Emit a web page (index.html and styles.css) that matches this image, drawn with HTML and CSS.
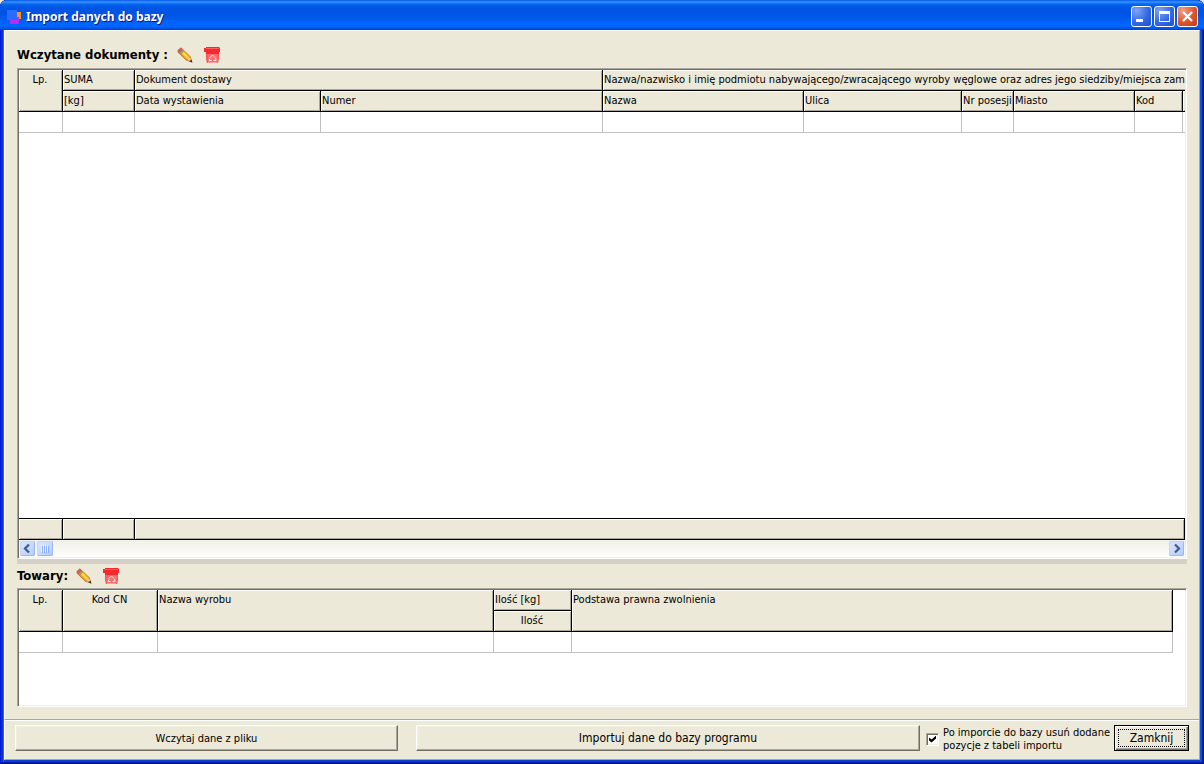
FILE: index.html
```html
<!DOCTYPE html>
<html lang="pl">
<head>
<meta charset="utf-8">
<title>Import danych do bazy</title>
<link rel="stylesheet" href="styles.css">
</head>
<body>
<svg class="symbols" aria-hidden="true">
  <symbol id="pencil" viewBox="0 0 16 16">
    <path d="M1 3L4 0.5L13.6 9.6L15.4 15.4L9.5 13.8L0.6 5.2Z" fill="#b87428"/>
    <path d="M0.6 3.4L3.6 0.6L5.6 2.8L2.6 5.8L0.6 4.6Z" fill="#d8604e"/>
    <path d="M2.8 5.9L5.8 2.9L7 4.1L4 7.1Z" fill="#8fa6b8"/>
    <path d="M4 7.2L7.2 4L13.2 9.8L9.9 13.1Z" fill="#f5ac18"/>
    <path d="M5.2 6.4L6.6 5L12.4 10.7L11 12Z" fill="#ffdc40"/>
    <path d="M10 13.2L13.2 10L14.2 14Z" fill="#efc9a0"/>
    <path d="M12.4 14.6L14.4 12.6L15.4 15.4Z" fill="#40281c"/>
  </symbol>
  <symbol id="bin" viewBox="0 0 17 17">
    <path d="M2 6H15V12L14 16H3L2 12Z" fill="#ff5050"/>
    <path d="M3 7H14V15H4Z" fill="#ff6c6c"/>
    <path d="M2 0H15L16 1V5H15V7H2V5H0V1H2Z" fill="#f9272e"/>
    <path d="M2 1H15V2H2Z" fill="#ff6060"/>
    <path d="M6 10.500L8.500 8L11 10.500M11.500 11L12 13.500H9.500M7.500 13.500H5L6 11.500" fill="none" stroke="#fff0f0"/>
    <path d="M4 15H13V16H4Z" fill="#ffa0a0"/>
  </symbol>
</svg>
<div class="window">
  <header class="titlebar">
    <svg class="app-icon" viewBox="0 0 16 16" aria-hidden="true">
      <rect x="7" y="3" width="7" height="7" fill="#ff9218"/>
      <rect x="3" y="8" width="9" height="7" fill="#b52cf2"/>
      <rect x="0" y="1" width="10" height="10" fill="#2a6cff"/>
    </svg>
    <h1 class="title">Import danych do bazy</h1>
    <div class="captions">
      <button class="caption" aria-label="Minimalizuj"><svg viewBox="0 0 19 19"><path d="M4 12H11V15H4Z" fill="#fff"/></svg></button>
      <button class="caption" aria-label="Maksymalizuj"><svg viewBox="0 0 19 19"><path d="M4 4H15V15H4ZM5 7V14H14V7Z" fill="#fff" fill-rule="evenodd"/></svg></button>
      <button class="caption close" aria-label="Zamknij okno"><svg viewBox="0 0 19 19"><path d="M5 5L14 14M14 5L5 14" stroke="#fff" stroke-width="2.300"/></svg></button>
    </div>
  </header>

  <main class="client">
    <section class="documents">
      <div class="heading">
        <h2>Wczytane dokumenty :</h2>
        <button class="tool" aria-label="Edytuj dokument"><svg viewBox="0 0 16 16"><use href="#pencil"/></svg></button>
        <button class="tool bin" aria-label="Usuń dokument"><svg viewBox="0 0 17 17"><use href="#bin"/></svg></button>
      </div>
      <div class="sunken">
        <div class="rows">
          <table class="grid">
            <colgroup><col class="c-lp"><col class="c-sum"><col class="c-date"><col class="c-number"><col class="c-name"><col class="c-street"><col class="c-house"><col class="c-city"><col class="c-code"><col class="c-more"></colgroup>
            <thead>
              <tr><th rowspan="2" class="center">Lp.</th><th>SUMA</th><th colspan="2">Dokument dostawy</th><th colspan="6">Nazwa/nazwisko i imię podmiotu nabywającego/zwracającego wyroby węglowe oraz adres jego siedziby/miejsca zamieszk</th></tr>
              <tr><th>[kg]</th><th>Data wystawienia</th><th>Numer</th><th>Nazwa</th><th>Ulica</th><th>Nr posesji</th><th>Miasto</th><th>Kod</th><th></th></tr>
            </thead>
            <tbody><tr><td></td><td></td><td></td><td></td><td></td><td></td><td></td><td></td><td></td><td></td></tr></tbody>
          </table>
        </div>
        <div class="summary"><div class="c-lp"></div><div class="c-sum"></div><div class="rest"></div></div>
        <div class="scrollbar">
          <button class="arrow" aria-label="W lewo"><svg viewBox="0 0 15 15"><path d="M9 3.500L5 7.500L9 11.500" fill="none" stroke="#3f5a8c" stroke-width="2.200"/></svg></button>
          <div class="thumb"><svg viewBox="0 0 16 15"><path d="M4.500 4V11M6.500 4V11M8.500 4V11M10.500 4V11" stroke="#eef4fe"/><path d="M5.500 5V12M7.500 5V12M9.500 5V12M11.500 5V12" stroke="#8cb0f8"/></svg></div>
          <div class="track"></div>
          <button class="arrow" aria-label="W prawo"><svg viewBox="0 0 15 15"><path d="M6 3.500L10 7.500L6 11.500" fill="none" stroke="#3f5a8c" stroke-width="2.200"/></svg></button>
        </div>
      </div>
    </section>

    <div class="splitter"></div>

    <section class="goods">
      <div class="heading">
        <h2>Towary:</h2>
        <button class="tool near" aria-label="Edytuj towar"><svg viewBox="0 0 16 16"><use href="#pencil"/></svg></button>
        <button class="tool bin" aria-label="Usuń towar"><svg viewBox="0 0 17 17"><use href="#bin"/></svg></button>
      </div>
      <div class="sunken">
        <div class="rows inset">
          <table class="grid fill">
            <colgroup><col class="c-lp"><col class="c-cn"><col class="c-product"><col class="c-amount"><col></colgroup>
            <thead>
              <tr><th rowspan="2" class="center">Lp.</th><th rowspan="2" class="center">Kod CN</th><th rowspan="2">Nazwa wyrobu</th><th>Ilość [kg]</th><th rowspan="2">Podstawa prawna zwolnienia</th></tr>
              <tr><th class="center">Ilość</th></tr>
            </thead>
            <tbody><tr><td></td><td></td><td></td><td></td><td></td></tr></tbody>
          </table>
        </div>
      </div>
    </section>
  </main>

  <footer class="actions">
    <button class="push load">Wczytaj dane z pliku</button>
    <button class="push import">Importuj dane do bazy programu</button>
    <label class="option"><input type="checkbox" checked><span>Po imporcie do bazy usuń dodane<br>pozycje z tabeli importu</span></label>
    <button class="push default"><span>Zamknij</span></button>
  </footer>
</div>
</body>
</html>
```
FILE: styles.css
```css
* { box-sizing: border-box; }
body {
  margin: 0;
  background: #ece9d8;
  color: #000;
  font: 11px/13px "DejaVu Sans Condensed", Tahoma, sans-serif;
}
h1, h2 { margin: 0; }
button { margin: 0; padding: 0; border: 0; font: inherit; color: inherit; }
svg { display: block; }
.symbols { position: absolute; width: 0; height: 0; }

.window {
  display: flex;
  flex-direction: column;
  height: 100vh;
  min-height: 420px;
  padding: 0 4px 4px;
  border-radius: 7px 7px 0 0;
  background: #0831d9;
  box-shadow: inset 1px 0 #0019cf, inset -1px 0 #00138c, inset 0 -1px #00138c, inset -2px 0 #001ea0, inset 0 -2px #001ea0, inset 3px 0 #0831d9, inset 4px 0 #166aee, inset -4px 0 #0855dd, inset 0 -4px #0441d8;
}
.titlebar {
  display: flex;
  align-items: center;
  flex: none;
  height: 30px;
  margin: 0 -4px;
  padding: 3px 6px 0 7px;
  border-radius: 7px 7px 0 0;
  background: linear-gradient(#0058e6 0, #3a93ff 2px, #0468f0 4px, #0055e5 7px, #0054e3 15px, #0062f8 22px, #0067ff 26px, #0058ee 28px, #003dd7 30px);
}
.app-icon { width: 16px; height: 16px; }
.title {
  flex: 1;
  margin-left: 3px;
  color: #fff;
  font: bold 12px/18px "Noto Sans", "Trebuchet MS", sans-serif;
  text-shadow: 1px 1px #0a1883;
  white-space: nowrap;
}
.captions { display: flex; gap: 2px; }
.caption {
  width: 21px;
  height: 21px;
  border: 1px solid #fff;
  border-radius: 3px;
  background: radial-gradient(circle at 25% 20%, #7da5f5, #3468e4 55%, #1c4fd6);
}
.close { background: radial-gradient(circle at 25% 20%, #f0a088, #e0552c 55%, #c33a12); }

.client {
  display: flex;
  flex: 1;
  flex-direction: column;
  min-height: 0;
  padding: 13px 12px 12px 12px;
  background: #ece9d8;
  border: solid;
  border-width: 1px 1px 0;
  border-color: #fff #aca899 #aca899 #fff;
}
.documents, .goods { display: flex; flex-direction: column; min-height: 0; }
.documents { flex: 1; }
.goods { height: 143px; flex: none; }
.heading { display: flex; flex: none; align-items: center; height: 22px; margin-bottom: 2px; }
.goods .heading { height: 24px; margin: 0; }
h2 { font: bold 13px/18px "DejaVu Sans Condensed", Verdana, sans-serif; white-space: nowrap; }
.tool { width: 16px; height: 16px; margin-left: 9px; background: none; }
.tool.near { margin-left: 8px; }
.tool.bin { width: 17px; height: 17px; margin-left: 11px; }

.sunken {
  display: flex;
  flex: 1;
  flex-direction: column;
  min-height: 0;
  background: #fff;
  border: 1px solid;
  border-color: #aca899 #fff #fff #aca899;
  box-shadow: inset 1px 1px #716f64, inset -1px -1px #f1efe2;
  padding: 1px;
}
.rows { flex: 1; min-height: 0; overflow: hidden; }
.inset { padding-right: 12px; }
.grid { width: 1212px; table-layout: fixed; border-collapse: separate; border-spacing: 0; }
.fill { width: 100%; }
.grid th, .grid td { height: 21px; padding: 0; border: solid #c0c0c0; border-width: 0 1px 1px 0; }
.grid th {
  padding: 3px 0 0 1px;
  overflow: hidden;
  background: #ece9d8;
  border-color: #000;
  box-shadow: inset 1px 1px #fff, inset -1px -1px #aca899;
  font-weight: normal;
  text-align: left;
  vertical-align: top;
  white-space: nowrap;
}
.grid th.center { padding: 3px 1px 0 0; text-align: center; }
.c-lp { width: 44px; }
.c-sum { width: 72px; }
.c-date { width: 186px; }
.c-number { width: 282px; }
.c-name { width: 201px; }
.c-street { width: 158px; }
.c-house { width: 52px; }
.c-city { width: 121px; }
.c-code { width: 48px; }
.c-more { width: 48px; }
.c-cn { width: 95px; }
.c-product { width: 336px; }
.c-amount { width: 78px; }

.summary { display: flex; flex: none; height: 22px; border-top: 1px solid #000; }
.summary div {
  background: #ece9d8;
  border: solid #000;
  border-width: 0 1px 1px 0;
  box-shadow: inset 1px 1px #fff, inset -1px -1px #aca899;
}
.rest { flex: 1; }
.scrollbar { display: flex; flex: none; height: 17px; padding: 1px; background: linear-gradient(#f0efe8, #fefefb); }
.arrow, .thumb {
  width: 15px;
  height: 15px;
  border-radius: 2px;
  background: linear-gradient(135deg, #dce7ff, #b5cbfb);
  box-shadow: inset -1px -1px #9ab8f0, inset 1px 1px #c3d5fd;
}
.thumb { width: 16px; margin-left: 2px; }
.track { flex: 1; }
.splitter { flex: none; height: 5px; background: #d4d0c8; }

.actions {
  display: flex;
  flex: none;
  height: 41px;
  padding: 5px 10px 0;
  background: #ece9d8;
  border: 1px solid #aca899;
  border-left-color: #fff;
  box-shadow: inset 0 1px #fff;
}
.push {
  height: 26px;
  background: #ece9d8;
  border: 1px solid;
  border-color: #fff #716f64 #716f64 #fff;
  box-shadow: inset -1px -1px #aca899, inset 1px 1px #f1efe2;
}
.load { flex: 383; }
.import { flex: 505; margin-left: 18px; font-size: 12px; }
.option { display: flex; align-items: center; flex: none; height: 28px; margin-left: 6px; white-space: nowrap; }
.option input {
  appearance: none;
  position: relative;
  width: 13px;
  height: 13px;
  margin: 0 4px 0 0;
  border: 1px solid;
  border-color: #aca899 #fff #fff #aca899;
  background: #fff;
  box-shadow: inset 1px 1px #716f64, inset -1px -1px #f1efe2;
}
.option input:checked::after {
  content: "";
  position: absolute;
  inset: 2px;
  background: #000;
  clip-path: polygon(0 29%, 36% 57%, 100% 0, 100% 43%, 36% 100%, 0 71%);
}
.default {
  flex: none;
  width: 75px;
  margin-left: 4px;
  padding: 2px;
  border-color: #000;
  box-shadow: inset 1px 1px #fff, inset -1px -1px #716f64, inset -2px -2px #aca899;
  font-size: 12px;
}
.default span { display: block; margin: 0 1px; border: 1px dotted #000; line-height: 16px; }
```
